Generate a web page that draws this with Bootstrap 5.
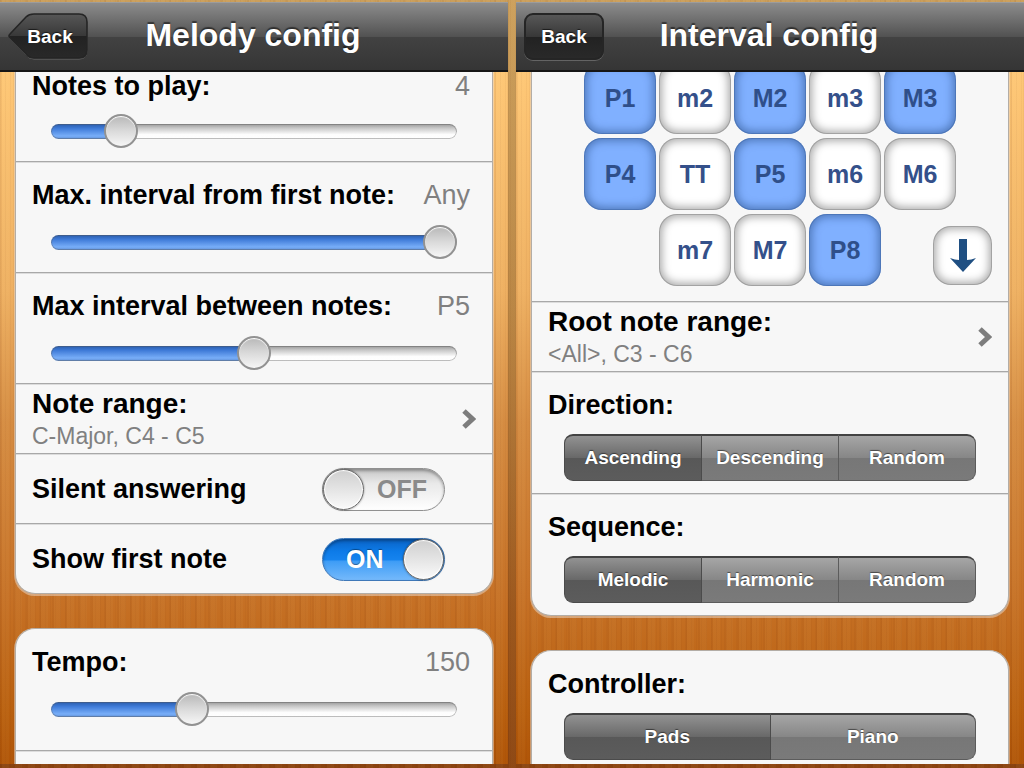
<!DOCTYPE html>
<html lang="en">
<head>
<meta charset="utf-8">
<meta name="viewport" content="width=device-width, initial-scale=1">
<title>Ear trainer settings</title>
<link href="https://cdn.jsdelivr.net/npm/bootstrap@5.3.0/dist/css/bootstrap.min.css" rel="stylesheet">
<style>
  :root {
    --grain: repeating-linear-gradient(90deg, rgba(90,30,0,.04) 0 1px, transparent 1px 5px),
             repeating-linear-gradient(90deg, rgba(90,30,0,.05) 0 2px, rgba(255,220,150,.04) 2px 9px, transparent 9px 13px);
  }
  body {
    font-family: "Liberation Sans", Arial, sans-serif;
    color: #000;
    background: var(--grain), linear-gradient(#cb9f5c, #b78342 40%, #985218 80%, #8a4310);
    padding: 2px 0 4px;
    gap: 8px;
  }
  .screen {
    flex: 1 1 0;
    min-width: 0;
    background: var(--grain), linear-gradient(#ffd080, #fdc574 12%, #eeb062 38%, #d58c42 55%, #c67126 78%, #b9600f 93%, #b05508);
  }
  .titlebar {
    height: 70px;
    flex: none;
    position: relative;
    z-index: 2;
    padding: 0 8px;
    background: linear-gradient(#8c8c8c, #525252 50%, #424242 51%, #353535);
    border-top: 1px solid #9c9c9c;
    border-bottom: 2px solid #161616;
  }
  .titlebar h1 {
    font-size: 32px;
    line-height: 36px;
    font-weight: 700;
    color: #fff;
    margin: 0 82px 0 0;
    padding-bottom: 3px;
    text-shadow: 0 -2px 1px rgba(0,0,0,.5);
  }
  .back-btn {
    width: 80px;
    height: 47px;
    color: #fff;
    font-size: 19px;
    line-height: 24px;
    font-weight: 700;
    text-shadow: 0 -1px 1px rgba(0,0,0,.6);
  }
  .back-box {
    border: 2px solid #252525;
    border-radius: 9px;
    background: linear-gradient(#575757, #383838 50%, #222 51%, #292929);
    box-shadow: 0 1px 0 rgba(255,255,255,.22);
  }
  .back-arrow { border: 0; padding-left: 4px; position: relative; }
  .back-arrow svg { position: absolute; inset: 0; width: 100%; height: 100%; }
  .back-arrow span { position: relative; }
  .pane { overflow: hidden; padding: 0 15px; gap: 34px; }
  .group {
    background: #f7f7f7;
    border: 1px solid #b3ada6;
    border-radius: 20px;
    box-shadow: 0 1px 0 1px rgba(235,220,205,.5);
    flex: none;
  }
  .group-top { border-top: 0; border-top-left-radius: 0; border-top-right-radius: 0; }
  .group-end { border-bottom: 0; border-bottom-left-radius: 0; border-bottom-right-radius: 0; }
  .setting { padding: 17px 16px 12px; }
  .setting + .setting, .pad-area + .setting {
    border-top: 1px solid #a8a8a8;
    box-shadow: inset 0 1px 0 #dcdcdc;
  }
  .setting-cut { padding-top: 0; }
  .setting-short { padding-top: 1px; padding-bottom: 0; height: 70px; }
  .setting-tall { padding-bottom: 23px; }
  .cap { font-size: 27px; line-height: 32px; font-weight: 700; }
  .cap-link { font-size: 28px; line-height: 34px; }
  .amount { font-size: 27px; line-height: 32px; color: #808080; padding-right: 6px; }
  .cap-cut { line-height: 28px; }
  .note { font-size: 23px; line-height: 30px; color: #808080; }
  .slide-wrap { padding: 13px 19px 0; }
  .slide { display: block; height: 36px; }
  .slide::-webkit-slider-runnable-track {
    height: 15px;
    border-radius: 8px;
    background:
      linear-gradient(#2a5cab, #3f7bd8 30%, #78aef8 80%, #5f8fd6) 0 0 / var(--fill) 100% no-repeat,
      linear-gradient(#999, #c4c4c4 25%, #fdfdfd 70%, #fff);
    box-shadow: inset 0 0 0 1px rgba(90,90,90,.4);
  }
  .slide::-webkit-slider-thumb {
    width: 34px;
    height: 34px;
    margin-top: -10px;
    border: 2px solid #929292;
    border-radius: 50%;
    background: linear-gradient(#b8b8b8, #dadada 50%, #f6f6f6);
    box-shadow: inset 0 1px 1px #fff;
  }
  .slide::-webkit-slider-thumb:active { background: #ccc; }
  .chevron { width: 14px; height: 20px; }
  .toggle { display: grid; width: 123px; height: 43px; margin-right: 31px; }
  .toggle > * { grid-area: 1 / 1; }
  .toggle .form-check-input {
    width: 123px;
    height: 43px;
    margin: 0;
    border: 1px solid #909090;
    border-radius: 22px;
    background: linear-gradient(#c6c6c6, #e9e9e9 35%, #f1f1f1 60%, #fff);
    box-shadow: inset 0 2px 3px rgba(0,0,0,.3);
    display: flex;
  }
  .toggle .form-check-input::before {
    content: "";
    width: 41px;
    height: 41px;
    flex: none;
    border: 1px solid #6a6a6a;
    border-radius: 50%;
    background: linear-gradient(#cfcfcf, #fafafa);
    box-shadow: inset 0 0 1px 1px #fff, 0 0 2px rgba(0,0,0,.5);
  }
  .toggle .form-check-input:checked {
    background: linear-gradient(#0a62c4, #0d7be8 30%, #1583ee 50%, #3f9df6 55%, #74b9fb);
    border-color: #3f78b8;
    justify-content: flex-end;
  }
  .toggle-word {
    align-self: center;
    font-size: 25px;
    line-height: 28px;
    pointer-events: none;
    z-index: 1;
  }
  .word-off { color: #8a8a8a; font-weight: 700; padding-left: 55px; }
  .word-on { color: #fff; font-weight: 700; padding-left: 24px; text-shadow: 0 -1px 1px rgba(0,0,0,.4); }
  /* The pad grid is scrolled ten pixels under the title bar. */
  .pad-area { position: relative; padding-bottom: 15px; margin-top: -10px; }
  .pads { display: grid; grid-template-columns: repeat(5, 72px); gap: 4px 3px; justify-content: center; }
  .pad {
    height: 72px;
    padding: 0;
    border: 0;
    border-radius: 18px;
    font-size: 25px;
    line-height: 28px;
    font-weight: 700;
    color: #34508a;
    background: #fff;
    box-shadow: inset 0 0 8px 3px rgba(0,0,0,.34), inset 0 0 0 1px rgba(150,150,150,.4);
  }
  .pad:hover { background: #fff; color: #34508a; }
  .pad.active {
    background: #80b0ff;
    color: #2f4f8a;
    box-shadow: inset 0 0 9px 3px rgba(30,65,120,.5), inset 0 0 0 1px rgba(70,110,175,.4);
  }
  .pad-third { grid-column-start: 2; }
  .pad-dir { position: absolute; right: 16px; bottom: 16px; width: 59px; height: 59px; }
  .pad-dir svg { width: 26px; height: 34px; }
  .segments { margin: 13px 16px 0; }
  .segments .btn {
    flex: 1 1 0;
    height: 47px;
    padding: 0;
    font-size: 19px;
    line-height: 43px;
    font-weight: 700;
    color: #fff;
    border: 1px solid #5c5c5c;
    border-top: 2px solid #434343;
    border-radius: 9px;
    text-shadow: 0 -1px 1px rgba(0,0,0,.5);
    background: linear-gradient(#a6a6a6, #868686 50%, #777 51%, #7a7a7a);
  }
  .segments .btn-check:checked + .btn {
    color: #fff;
    border-color: #434343 #4b4b4b #4b4b4b;
    background: linear-gradient(#929292, #686868 50%, #585858 51%, #5c5c5c);
  }
</style>
</head>
<body class="d-flex vh-100 overflow-hidden">

<section class="screen d-flex flex-column">
  <header class="titlebar d-flex align-items-center">
    <button type="button" class="btn back-btn back-arrow py-0 pe-0">
      <svg viewBox="0 0 80 47" preserveAspectRatio="none" aria-hidden="true">
        <defs>
          <linearGradient id="backFill" x1="0" y1="0" x2="0" y2="1">
            <stop offset="0" stop-color="#575757"/><stop offset=".5" stop-color="#383838"/>
            <stop offset=".51" stop-color="#222"/><stop offset="1" stop-color="#292929"/>
          </linearGradient>
        </defs>
        <path d="M26 2H71Q79 2 79 10V38Q79 46 71 46H26Q21 46 18 42L2 26Q0 24 2 22L18 5Q21 2 26 2Z" fill="none" stroke="#6a6a6a"/>
        <path d="M26 1H71Q79 1 79 9V37Q79 45 71 45H26Q21 45 18 41L2 25Q0 23 2 21L18 4Q21 1 26 1Z" fill="url(#backFill)" stroke="#252525" stroke-width="1.6"/>
      </svg>
      <span>Back</span>
    </button>
    <h1 class="flex-fill text-center">Melody config</h1>
  </header>

  <main class="pane d-flex flex-column flex-fill">
    <div class="group group-top">
      <div class="setting setting-cut">
        <div class="d-flex justify-content-between">
          <label class="cap cap-cut" for="notes">Notes to play:</label><output class="amount cap-cut" for="notes">4</output>
        </div>
        <div class="slide-wrap"><input type="range" class="form-range slide" id="notes" min="2" max="16" value="4" style="--fill:17%"></div>
      </div>
      <div class="setting">
        <div class="d-flex justify-content-between">
          <label class="cap" for="maxFirst">Max. interval from first note:</label><output class="amount" for="maxFirst">Any</output>
        </div>
        <div class="slide-wrap"><input type="range" class="form-range slide" id="maxFirst" min="1" max="13" value="13" style="--fill:96%"></div>
      </div>
      <div class="setting">
        <div class="d-flex justify-content-between">
          <label class="cap" for="maxBetween">Max interval between notes:</label><output class="amount" for="maxBetween">P5</output>
        </div>
        <div class="slide-wrap"><input type="range" class="form-range slide" id="maxBetween" min="1" max="13" value="7" style="--fill:50%"></div>
      </div>
      <a href="#note-range" class="setting setting-short d-flex align-items-center justify-content-between text-decoration-none text-reset">
        <span><span class="cap cap-link d-block">Note range:</span><span class="note d-block">C-Major, C4 - C5</span></span>
        <svg class="chevron" viewBox="0 0 14 20" aria-hidden="true"><path d="M2 2l8.500 8L2 18" fill="none" stroke="#7d7d7d" stroke-width="5"/></svg>
      </a>
      <div class="setting setting-short d-flex align-items-center justify-content-between">
        <label class="cap" for="silent">Silent answering</label>
        <div class="toggle"><input class="form-check-input" type="checkbox" role="switch" id="silent"><span class="toggle-word word-off">OFF</span></div>
      </div>
      <div class="setting setting-short d-flex align-items-center justify-content-between">
        <label class="cap" for="showFirst">Show first note</label>
        <div class="toggle"><input class="form-check-input" type="checkbox" role="switch" id="showFirst" checked><span class="toggle-word word-on">ON</span></div>
      </div>
    </div>

    <div class="group group-end">
      <div class="setting setting-tall">
        <div class="d-flex justify-content-between">
          <label class="cap" for="tempo">Tempo:</label><output class="amount" for="tempo">150</output>
        </div>
        <div class="slide-wrap"><input type="range" class="form-range slide" id="tempo" min="30" max="390" value="150" style="--fill:35%"></div>
      </div>
      <div class="setting"></div>
    </div>
  </main>
</section>

<section class="screen d-flex flex-column">
  <header class="titlebar d-flex align-items-center">
    <button type="button" class="btn back-btn back-box p-0">Back</button>
    <h1 class="flex-fill text-center">Interval config</h1>
  </header>

  <main class="pane d-flex flex-column flex-fill">
    <div class="group group-top">
      <div class="pad-area">
        <div class="pads">
          <button type="button" class="btn pad active">P1</button>
          <button type="button" class="btn pad">m2</button>
          <button type="button" class="btn pad active">M2</button>
          <button type="button" class="btn pad">m3</button>
          <button type="button" class="btn pad active">M3</button>
          <button type="button" class="btn pad active">P4</button>
          <button type="button" class="btn pad">TT</button>
          <button type="button" class="btn pad active">P5</button>
          <button type="button" class="btn pad">m6</button>
          <button type="button" class="btn pad">M6</button>
          <button type="button" class="btn pad pad-third">m7</button>
          <button type="button" class="btn pad">M7</button>
          <button type="button" class="btn pad active">P8</button>
        </div>
        <button type="button" class="btn pad pad-dir" aria-label="Down">
          <svg viewBox="0 0 26 34" aria-hidden="true"><path d="M9 0h8v21q4 0 9-2L13 33 0 19q5 2 9 2z" fill="#1f4f82"/></svg>
        </button>
      </div>
      <a href="#root-range" class="setting setting-short d-flex align-items-center justify-content-between text-decoration-none text-reset">
        <span><span class="cap cap-link d-block">Root note range:</span><span class="note d-block">&lt;All&gt;, C3 - C6</span></span>
        <svg class="chevron" viewBox="0 0 14 20" aria-hidden="true"><path d="M2 2l8.500 8L2 18" fill="none" stroke="#7d7d7d" stroke-width="5"/></svg>
      </a>
      <div class="setting">
        <div class="cap" id="dirCap">Direction:</div>
        <div class="btn-group d-flex segments" role="group" aria-labelledby="dirCap">
          <input type="radio" class="btn-check" name="dir" id="dir1" checked><label class="btn" for="dir1">Ascending</label>
          <input type="radio" class="btn-check" name="dir" id="dir2"><label class="btn" for="dir2">Descending</label>
          <input type="radio" class="btn-check" name="dir" id="dir3"><label class="btn" for="dir3">Random</label>
        </div>
      </div>
      <div class="setting">
        <div class="cap" id="seqCap">Sequence:</div>
        <div class="btn-group d-flex segments" role="group" aria-labelledby="seqCap">
          <input type="radio" class="btn-check" name="seq" id="seq1" checked><label class="btn" for="seq1">Melodic</label>
          <input type="radio" class="btn-check" name="seq" id="seq2"><label class="btn" for="seq2">Harmonic</label>
          <input type="radio" class="btn-check" name="seq" id="seq3"><label class="btn" for="seq3">Random</label>
        </div>
      </div>
    </div>

    <div class="group group-end">
      <div class="setting">
        <div class="cap" id="ctlCap">Controller:</div>
        <div class="btn-group d-flex segments" role="group" aria-labelledby="ctlCap">
          <input type="radio" class="btn-check" name="ctl" id="ctl1" checked><label class="btn" for="ctl1">Pads</label>
          <input type="radio" class="btn-check" name="ctl" id="ctl2"><label class="btn" for="ctl2">Piano</label>
        </div>
      </div>
    </div>
  </main>
</section>

<script src="https://cdn.jsdelivr.net/npm/bootstrap@5.3.0/dist/js/bootstrap.bundle.min.js"></script>
</body>
</html>
